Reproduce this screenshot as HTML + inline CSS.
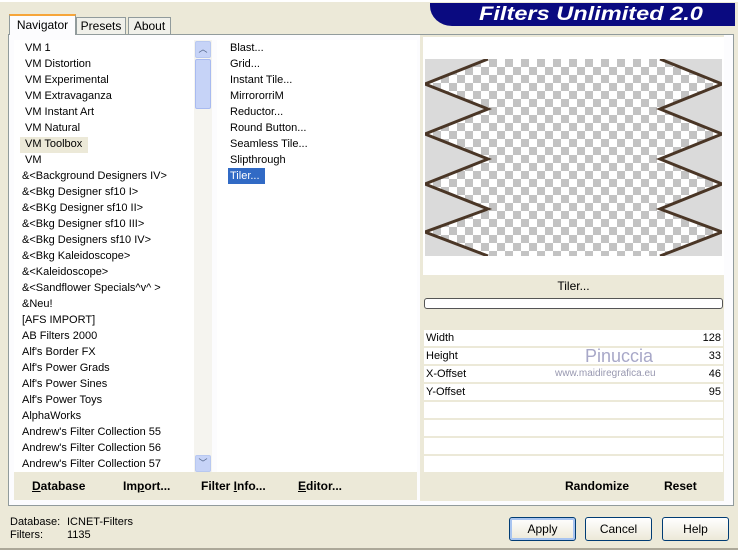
<!DOCTYPE html>
<html><head><style>
*{margin:0;padding:0;box-sizing:border-box}
body{width:738px;height:550px;background:#ece9d8;font-family:"Liberation Sans",sans-serif;font-size:11px;color:#000;position:relative;overflow:hidden}
.a{position:absolute}
.li{position:absolute;white-space:nowrap;height:16px;line-height:16px}
.btn{position:absolute;border:1px solid #003c74;border-radius:3px;background:linear-gradient(#fff,#ece9d8);text-align:center;line-height:22px;font-size:12px}
.row{position:absolute;left:424px;width:299px;height:16px;background:#fff;line-height:16px;font-size:11px}
.b{font-weight:bold;font-size:12px}
</style></head><body>
<div class="a" style="left:0;top:0;width:738px;height:2px;background:#fff"></div>
<!-- title -->
<div class="a" style="left:430px;top:3px;width:305px;height:23px;background:#0a0a80;border-bottom-left-radius:22px 20px"></div>
<div class="a" style="left:479px;top:3px;color:#fff;font:italic bold 19px 'Liberation Sans',sans-serif;line-height:24px;transform:scaleX(1.24);transform-origin:left;white-space:nowrap">Filters Unlimited 2.0</div>
<!-- tab panel -->
<div class="a" style="left:8px;top:34px;width:726px;height:472px;border:1px solid #919b9c;background:#fcfcfe"></div>
<div class="a" style="left:420px;top:35px;width:304px;height:466px;background:#ece9d8"></div>
<div class="a" style="left:9px;top:14px;width:67px;height:21px;background:#fcfcfe;border:1px solid #919b9c;border-bottom:none;border-top:2px solid #f6a53a;line-height:18px;text-align:center;font-size:12px">Navigator</div>
<div class="a" style="left:76px;top:17px;width:50px;height:18px;background:#f0f0ea;border:1px solid #919b9c;line-height:16px;text-align:center;font-size:12px">Presets</div>
<div class="a" style="left:128px;top:17px;width:43px;height:18px;background:#f0f0ea;border:1px solid #919b9c;line-height:16px;text-align:center;font-size:12px">About</div>
<!-- lists -->
<div class="a" style="left:14px;top:40px;width:180px;height:432px;background:#fff"></div>
<div class="a" style="left:194px;top:40px;width:18px;height:432px;background:#f5f4ef"></div>
<div class="a" style="left:195px;top:41px;width:16px;height:17px;border:1px solid #b8c8f0;border-radius:2px;background:#c6d3f7;color:#4d6185;font-size:9px;text-align:center;line-height:15px">︿</div>
<div class="a" style="left:195px;top:59px;width:16px;height:50px;border:1px solid #a8baf0;border-radius:2px;background:#c6d3f7"></div>
<div class="a" style="left:195px;top:455px;width:16px;height:17px;border:1px solid #b8c8f0;border-radius:2px;background:#c6d3f7;color:#4d6185;font-size:9px;text-align:center;line-height:15px">﹀</div>
<div class="a" style="left:217px;top:40px;width:200px;height:432px;background:#fff"></div>
<div class="a" style="left:20px;top:137px;width:68px;height:16px;background:#ece9d8"></div>
<div class="li" style="left:25px;top:40px">VM 1</div>
<div class="li" style="left:25px;top:56px">VM Distortion</div>
<div class="li" style="left:25px;top:72px">VM Experimental</div>
<div class="li" style="left:25px;top:88px">VM Extravaganza</div>
<div class="li" style="left:25px;top:104px">VM Instant Art</div>
<div class="li" style="left:25px;top:120px">VM Natural</div>
<div class="li" style="left:25px;top:136px">VM Toolbox</div>
<div class="li" style="left:25px;top:152px">VM</div>
<div class="li" style="left:22px;top:168px">&amp;&lt;Background Designers IV&gt;</div>
<div class="li" style="left:22px;top:184px">&amp;&lt;Bkg Designer sf10 I&gt;</div>
<div class="li" style="left:22px;top:200px">&amp;&lt;BKg Designer sf10 II&gt;</div>
<div class="li" style="left:22px;top:216px">&amp;&lt;Bkg Designer sf10 III&gt;</div>
<div class="li" style="left:22px;top:232px">&amp;&lt;Bkg Designers sf10 IV&gt;</div>
<div class="li" style="left:22px;top:248px">&amp;&lt;Bkg Kaleidoscope&gt;</div>
<div class="li" style="left:22px;top:264px">&amp;&lt;Kaleidoscope&gt;</div>
<div class="li" style="left:22px;top:280px">&amp;&lt;Sandflower Specials^v^ &gt;</div>
<div class="li" style="left:22px;top:296px">&amp;Neu!</div>
<div class="li" style="left:22px;top:312px">[AFS IMPORT]</div>
<div class="li" style="left:22px;top:328px">AB Filters 2000</div>
<div class="li" style="left:22px;top:344px">Alf's Border FX</div>
<div class="li" style="left:22px;top:360px">Alf's Power Grads</div>
<div class="li" style="left:22px;top:376px">Alf's Power Sines</div>
<div class="li" style="left:22px;top:392px">Alf's Power Toys</div>
<div class="li" style="left:22px;top:408px">AlphaWorks</div>
<div class="li" style="left:22px;top:424px">Andrew's Filter Collection 55</div>
<div class="li" style="left:22px;top:440px">Andrew's Filter Collection 56</div>
<div class="li" style="left:22px;top:456px">Andrew's Filter Collection 57</div>
<div class="li" style="left:230px;top:40px">Blast...</div>
<div class="li" style="left:230px;top:56px">Grid...</div>
<div class="li" style="left:230px;top:72px">Instant Tile...</div>
<div class="li" style="left:230px;top:88px">MirrororriM</div>
<div class="li" style="left:230px;top:104px">Reductor...</div>
<div class="li" style="left:230px;top:120px">Round Button...</div>
<div class="li" style="left:230px;top:136px">Seamless Tile...</div>
<div class="li" style="left:230px;top:152px">Slipthrough</div>
<div class="li" style="left:228px;top:168px;width:37px;background:#316ac5;color:#fff;padding-left:2px">Tiler...</div>
<!-- bottom left bar -->
<div class="a" style="left:14px;top:472px;width:403px;height:28px;background:#ece9d8"></div>
<div class="a b" style="left:32px;top:479px"><u>D</u>atabase</div>
<div class="a b" style="left:123px;top:479px">Im<u>p</u>ort...</div>
<div class="a b" style="left:201px;top:479px">Filter <u>I</u>nfo...</div>
<div class="a b" style="left:298px;top:479px"><u>E</u>ditor...</div>
<!-- preview -->
<div class="a" style="left:423px;top:37px;width:301px;height:238px;background:#fff"></div>
<svg class="a" style="left:425px;top:59px" width="297" height="197" viewBox="0 0 297 197">
<defs><pattern id="c" width="16" height="16" patternUnits="userSpaceOnUse"><rect width="16" height="16" fill="#fff"/><rect width="8" height="8" fill="#c3c3c3"/><rect x="8" y="8" width="8" height="8" fill="#c3c3c3"/></pattern></defs>
<rect width="297" height="197" fill="url(#c)"/>
<polygon points="0,0 63,0 0,25 63,50 0,75 63,100 0,125 63,150 0,173 63,197 0,197" fill="#dadada"/>
<polygon points="297,0 235,0 297,25 235,50 297,75 235,100 297,125 235,150 297,173 235,197 297,197" fill="#dadada"/>
<polyline points="63,0 0,25 63,50 0,75 63,100 0,125 63,150 0,173 63,197" fill="none" stroke="#4a3626" stroke-width="3"/>
<polyline points="235,0 297,25 235,50 297,75 235,100 297,125 235,150 297,173 235,197" fill="none" stroke="#4a3626" stroke-width="3"/>
</svg>
<div class="a" style="left:423px;top:276px;width:301px;height:20px;text-align:center;line-height:20px;font-size:12px">Tiler...</div>
<div class="a" style="left:424px;top:298px;width:299px;height:11px;border:1px solid #555;border-radius:3px;background:#fff"></div>
<div class="row" style="top:330px"><span style="position:absolute;left:2px">Width</span><span style="position:absolute;right:2px">128</span></div>
<div class="row" style="top:348px"><span style="position:absolute;left:2px">Height</span><span style="position:absolute;right:2px">33</span></div>
<div class="row" style="top:366px"><span style="position:absolute;left:2px">X-Offset</span><span style="position:absolute;right:2px">46</span></div>
<div class="row" style="top:384px"><span style="position:absolute;left:2px">Y-Offset</span><span style="position:absolute;right:2px">95</span></div>
<div class="row" style="top:402px"></div>
<div class="row" style="top:420px"></div>
<div class="row" style="top:438px"></div>
<div class="row" style="top:456px"></div>
<div class="a" style="left:585px;top:346px;color:#a8a8c8;font-size:18px">Pinuccia</div>
<div class="a" style="left:555px;top:368px;color:#9898b0;font-size:10px">www.maidiregrafica.eu</div>
<div class="a b" style="left:565px;top:479px">Randomize</div>
<div class="a b" style="left:664px;top:479px">Reset</div>
<!-- status -->
<div class="a" style="left:10px;top:516px">Database:</div><div class="a" style="left:67px;top:516px">ICNET-Filters</div>
<div class="a" style="left:10px;top:529px">Filters:</div><div class="a" style="left:67px;top:529px">1135</div>
<div class="btn" style="left:509px;top:517px;width:67px;height:24px;box-shadow:inset 0 0 0 2px #a8c4f0">Apply</div>
<div class="btn" style="left:585px;top:517px;width:67px;height:24px">Cancel</div>
<div class="btn" style="left:662px;top:517px;width:67px;height:24px">Help</div>
<div class="a" style="left:0;top:548px;width:738px;height:2px;background:#aca899"></div>
</body></html>
